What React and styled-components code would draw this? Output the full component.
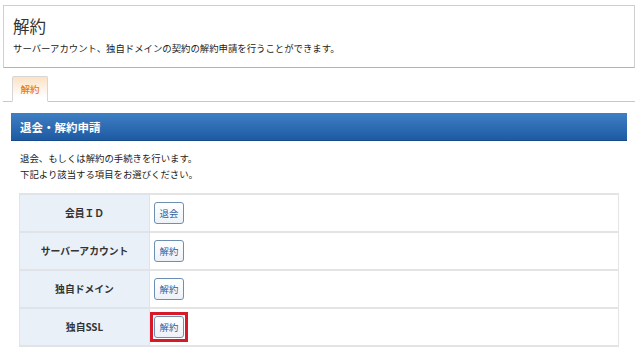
import { styled, createGlobalStyle } from "styled-components";

const GlobalStyle = createGlobalStyle`
  body {
    margin: 0;
    background: #fff;
    font-family: "Noto Sans CJK JP", "Noto Sans", sans-serif;
    color: #333;
  }
`;

const rows = [
  { label: "会員ＩＤ", action: "退会" },
  { label: "サーバーアカウント", action: "解約" },
  { label: "独自ドメイン", action: "解約" },
  { label: "独自SSL", action: "解約", highlight: true },
];

export default function App() {
  return (
    <Page>
      <GlobalStyle />
      <HeaderBox>
        <Title>解約</Title>
        <Lead>サーバーアカウント、独自ドメインの契約の解約申請を行うことができます。</Lead>
      </HeaderBox>
      <TabBar>
        <Tab>解約</Tab>
      </TabBar>
      <Section>
        <SectionTitle>退会・解約申請</SectionTitle>
        <Description>
          退会、もしくは解約の手続きを行います。
          <br />
          下記より該当する項目をお選びください。
        </Description>
        <Table>
          <tbody>
            {rows.map((row) => (
              <tr key={row.label}>
                <LabelCell>{row.label}</LabelCell>
                <ValueCell>
                  <Marker $active={row.highlight}>
                    <ActionButton>{row.action}</ActionButton>
                  </Marker>
                </ValueCell>
              </tr>
            ))}
          </tbody>
        </Table>
      </Section>
    </Page>
  );
}

const Page = styled.div`
  width: 632px;
  padding: 5px 0 0 3px;
`;

const HeaderBox = styled.div`
  height: 61px;
  border: 1px solid #cfcfcf;
  border-bottom-color: #b4b4b4;
  padding: 0 9px;
  box-sizing: content-box;
`;

const Title = styled.h1`
  margin: 0;
  padding-top: 8px;
  font-size: 16.5px;
  line-height: 24px;
  font-weight: normal;
  color: #333;
`;

const Lead = styled.p`
  margin: 3px 0 0;
  font-size: 9.4px;
  line-height: 14px;
  color: #222;
`;

const TabBar = styled.div`
  margin-top: 8px;
  padding-left: 9px;
  height: 25px;
  display: flex;
  align-items: flex-end;
  border-bottom: 1px solid #c8c8c8;
`;

const Tab = styled.div`
  width: 34px;
  height: 24px;
  margin-bottom: -1px;
  border: 1px solid #d6d6d6;
  border-bottom-color: #fff;
  border-radius: 2px 2px 0 0;
  background: linear-gradient(#fbe2c4, #fff 85%);
  color: #e87a10;
  font-size: 9.5px;
  font-weight: 500;
  display: flex;
  align-items: center;
  justify-content: center;
`;

const Section = styled.section`
  padding: 11px 8px 0;
`;

const SectionTitle = styled.h2`
  margin: 0;
  height: 27px;
  padding-left: 9px;
  display: flex;
  align-items: center;
  background: linear-gradient(#3f7fc4, #1d5aa2);
  border-bottom: 1px solid #174a88;
  color: #fff;
  font-size: 11.5px;
  font-weight: bold;
`;

const Description = styled.p`
  margin: 0;
  padding: 9px 9px 0;
  font-size: 9.4px;
  line-height: 16px;
  color: #222;
`;

const Table = styled.table`
  margin: 11px 8px 0;
  width: 600px;
  border-collapse: collapse;
  border: 1px solid #dcdcdc;
`;

const LabelCell = styled.th`
  width: 129px;
  height: 36px;
  padding: 0;
  background: #e9f0f8;
  border: 2px solid #e0e4e8;
  border-width: 2px 1px;
  font-size: 9.8px;
  font-weight: bold;
  color: #333;
  text-align: center;
`;

const ValueCell = styled.td`
  padding: 0 0 0 4px;
  border: 2px solid #e4e4e4;
  border-width: 2px 1px;
  background: #fff;
`;

const Marker = styled.span`
  display: inline-flex;
  padding: 1px;
  border: 3px solid ${(p) => (p.$active ? "#d71a2a" : "transparent")};
  margin-left: -4px;
`;

const ActionButton = styled.button`
  width: 30px;
  height: 22px;
  padding: 0;
  border: 1px solid #6e8fb4;
  border-radius: 3px;
  background: linear-gradient(#fff, #edf2f8);
  color: #2b5f9e;
  font-family: inherit;
  font-size: 9.4px;
  cursor: pointer;
`;
